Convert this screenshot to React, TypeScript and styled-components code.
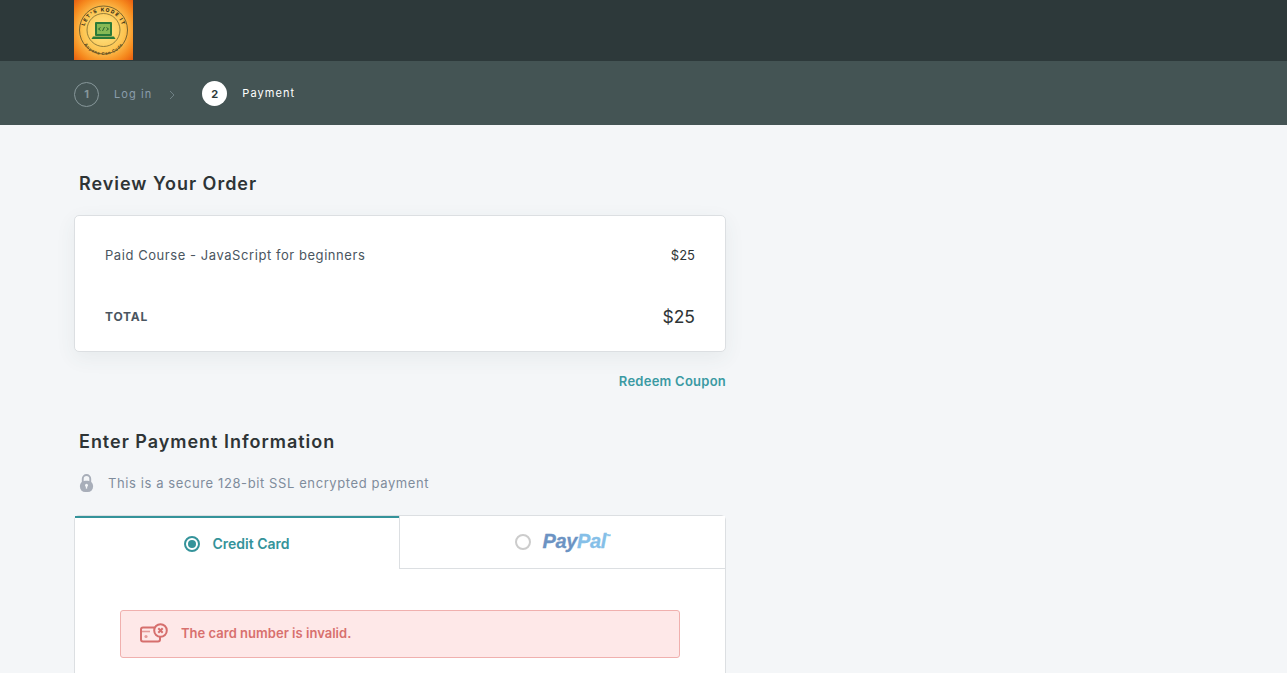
import React from "react";
import styled, { createGlobalStyle } from "styled-components";

const GlobalStyle = createGlobalStyle`
  html, body {
    margin: 0;
    padding: 0;
    height: 100%;
    overflow: hidden;
    background: #f4f6f8;
  }
  body {
    font-family: "Inter", "Liberation Sans", sans-serif;
  }
`;

const Page = styled.div`
  height: 100vh;
  overflow: hidden;
`;

const TopBar = styled.header`
  height: 61px;
  padding-left: 74px;
  background: #2d393a;
`;

const StepsBar = styled.nav`
  height: 64px;
  box-sizing: border-box;
  padding: 2px 0 0 74px;
  display: flex;
  align-items: center;
  background: #445454;
`;

const Step = styled.div`
  display: flex;
  align-items: center;
  gap: 15px;
`;

const StepNumber = styled.span<{ $active?: boolean }>`
  width: 25px;
  height: 25px;
  box-sizing: border-box;
  border-radius: 50%;
  display: flex;
  align-items: center;
  justify-content: center;
  font-size: 11px;
  font-weight: 700;
  color: ${p => (p.$active ? "#2d393a" : "#87979a")};
  background: ${p => (p.$active ? "#fff" : "transparent")};
  border: ${p => (p.$active ? "none" : "1px solid #87979a")};
  margin-top: ${p => (p.$active ? "-1px" : "0")};
`;

const StepLabel = styled.span<{ $active?: boolean }>`
  font-size: 11px;
  letter-spacing: 1.08px;
  color: ${p => (p.$active ? "#fff" : "#8a9dab")};
  margin-top: ${p => (p.$active ? "-3px" : "0")};
`;

const Chevron = styled.svg`
  margin: 2px 27px 0 17px;
`;

const Content = styled.main`
  width: 652px;
  margin-left: 74px;
  padding-top: 48px;
`;

const Heading = styled.h2`
  margin: 0 0 0 5px;
  font-size: 18px;
  line-height: 22px;
  font-weight: 600;
  letter-spacing: 0.98px;
  color: #2e3436;
`;

const OrderCard = styled.section`
  margin-top: 20px;
  height: 135px;
  padding: 0 30px;
  display: flex;
  flex-direction: column;
  background: #fff;
  border: 1px solid #dcdfe2;
  border-radius: 5px;
  box-shadow: 0 6px 20px rgba(60, 80, 90, 0.07);
`;

const OrderRow = styled.div<{ $height: number }>`
  height: ${p => p.$height}px;
  display: flex;
  justify-content: space-between;
  align-items: center;
`;

const CourseName = styled.span`
  font-size: 13px;
  letter-spacing: 0.56px;
  color: #4a5560;
`;

const Price = styled.span<{ $large?: boolean }>`
  font-size: ${p => (p.$large ? "17.5px" : "13px")};
  color: #2e3436;
`;

const TotalLabel = styled.span`
  font-size: 12px;
  font-weight: 700;
  letter-spacing: 0.75px;
  color: #4a5560;
`;

const CouponRow = styled.div`
  margin-top: 21px;
  display: flex;
  justify-content: flex-end;
`;

const CouponLink = styled.a`
  font-size: 13px;
  line-height: 16px;
  font-weight: 600;
  letter-spacing: 0.25px;
  color: #3b9aa3;
`;

const SecondHeading = styled(Heading)`
  margin-top: 42px;
`;

const SecureRow = styled.div`
  margin: 20px 0 0 5px;
  height: 20px;
  display: flex;
  align-items: center;
  gap: 14px;
  font-size: 13px;
  letter-spacing: 0.6px;
  color: #7f8c9c;
`;

const PaymentCard = styled.section`
  margin-top: 22px;
  height: 400px;
  background: #fff;
  border: 1px solid #dcdfe2;
  border-radius: 5px;
`;

const Tabs = styled.div`
  display: flex;
  height: 53px;
`;

const Tab = styled.div<{ $active?: boolean }>`
  flex: ${p => (p.$active ? "0 0 324px" : "1")};
  display: flex;
  align-items: center;
  justify-content: center;
  box-sizing: border-box;
  background: #fff;
  height: 53px;
  border-top: ${p => (p.$active ? "2px solid #34939a" : "none")};
  border-left: ${p => (p.$active ? "none" : "1px solid #dcdfe2")};
  border-bottom: ${p => (p.$active ? "none" : "1px solid #dcdfe2")};
  gap: 12px;
  padding-bottom: ${p => (p.$active ? "0" : "1px")};
`;

const Radio = styled.span<{ $checked?: boolean }>`
  width: 16px;
  height: 16px;
  box-sizing: border-box;
  border-radius: 50%;
  display: flex;
  align-items: center;
  justify-content: center;
  border: 2px solid ${p => (p.$checked ? "#34939a" : "#cccccc")};
  &::after {
    content: "";
    width: 8px;
    height: 8px;
    border-radius: 50%;
    background: ${p => (p.$checked ? "#34939a" : "transparent")};
  }
`;

const TabLabel = styled.span`
  font-size: 14px;
  font-weight: 600;
  color: #34939a;
`;

const PayPalLogo = styled.span`
  font-family: "Liberation Sans", sans-serif;
  font-size: 20px;
  font-weight: 700;
  font-style: italic;
  letter-spacing: -0.4px;
  color: #6c93c3;
  -webkit-text-stroke: 0.3px currentColor;
  display: flex;
  em {
    color: #85bfe8;
  }
  sup {
    font-size: 5px;
    font-style: normal;
    color: #85bfe8;
    line-height: 12px;
  }
`;

const Alert = styled.div`
  margin: 41px 45px 0;
  height: 48px;
  box-sizing: border-box;
  padding: 0 19px 2px;
  display: flex;
  align-items: center;
  gap: 13px;
  background: #fee8e8;
  border: 1px solid #f0b0ae;
  border-radius: 3px;
  font-size: 13px;
  font-weight: 600;
  letter-spacing: 0.02px;
  color: #d8706e;
`;

const LogoMark = () => (
  <svg width="59" height="60" viewBox="0 0 59 60" style={{ display: "block" }}>
    <defs>
      <radialGradient id="logoBg" cx="50%" cy="50%" r="70%">
        <stop offset="0%" stopColor="#fdeb8e" />
        <stop offset="50%" stopColor="#fdc552" />
        <stop offset="80%" stopColor="#f68a1e" />
        <stop offset="100%" stopColor="#e85f10" />
      </radialGradient>
      <path id="logoTop" d="M10 31a19.5 19.5 0 0 1 39 0" />
      <path id="logoBottom" d="M6.5 32a23 23 0 0 0 46 0" />
    </defs>
    <rect width="59" height="60" fill="url(#logoBg)" />
    <circle cx="29.5" cy="30" r="24" fill="none" stroke="#6a5a2a" strokeWidth="0.9" />
    <circle cx="29.5" cy="30" r="16.5" fill="none" stroke="#7a6a30" strokeWidth="0.8" />
    <text fontSize="5" fontWeight="800" fill="#3c3418" letterSpacing="1.2">
      <textPath href="#logoTop" startOffset="50%" textAnchor="middle">LET'S KODE IT</textPath>
    </text>
    <text fontSize="4.2" fontWeight="700" fill="#5a4a20" letterSpacing="0.6">
      <textPath href="#logoBottom" startOffset="50%" textAnchor="middle">Anyone Can Code</textPath>
    </text>
    <rect x="21" y="22" width="17" height="14" rx="1" fill="#2a7a38" />
    <rect x="23" y="24" width="13" height="10" fill="#86b955" />
    <path d="M26.5 27.5l-2 1.5 2 1.5M32.5 27.5l2 1.5-2 1.5M30.5 27l-2 4" fill="none" stroke="#1d5a2a" strokeWidth="0.9" />
    <path d="M19 36.5h21l1.5 2.5H17.5z" fill="#2a7a38" />
  </svg>
);

const LockIcon = () => (
  <svg width="15" height="20" viewBox="0 0 16 20">
    <path d="M4 9V5.5a4 4 0 0 1 8 0V9" fill="none" stroke="#a8aeb9" strokeWidth="2" />
    <rect x="1" y="7.5" width="14" height="12" rx="5.5" fill="#a8aeb9" />
    <circle cx="8" cy="12.5" r="1.6" fill="#f4f6f8" />
    <rect x="7.3" y="13" width="1.4" height="3" fill="#f4f6f8" />
  </svg>
);

const CardErrorIcon = () => (
  <svg width="28" height="20" viewBox="0 0 28 20" fill="none" stroke="#d66f6d">
    <path d="M15 4.5H3a2 2 0 0 0-2 2v10a2 2 0 0 0 2 2h15a2 2 0 0 0 2-2v-2.5" strokeWidth="2" />
    <path d="M2 8.5H10" strokeWidth="1.6" stroke="#e49a98" />
    <circle cx="6" cy="13.5" r="1.6" fill="#e49a98" stroke="none" />
    <circle cx="20.5" cy="7.5" r="6.3" strokeWidth="2" />
    <path d="M18.3 5.3l4.4 4.4M22.7 5.3l-4.4 4.4" strokeWidth="2" />
  </svg>
);

export default function App(): JSX.Element {
  return (
    <Page>
      <GlobalStyle />
      <TopBar>
        <LogoMark />
      </TopBar>
      <StepsBar>
        <Step>
          <StepNumber>1</StepNumber>
          <StepLabel>Log in</StepLabel>
        </Step>
        <Chevron width="6" height="10" viewBox="0 0 6 10">
          <path d="M1 1l4 4-4 4" fill="none" stroke="#6f8084" strokeWidth="1" />
        </Chevron>
        <Step>
          <StepNumber $active>2</StepNumber>
          <StepLabel $active>Payment</StepLabel>
        </Step>
      </StepsBar>
      <Content>
        <Heading>Review Your Order</Heading>
        <OrderCard>
          <OrderRow $height={78}>
            <CourseName>Paid Course - JavaScript for beginners</CourseName>
            <Price>$25</Price>
          </OrderRow>
          <OrderRow $height={45}>
            <TotalLabel>TOTAL</TotalLabel>
            <Price $large>$25</Price>
          </OrderRow>
        </OrderCard>
        <CouponRow>
          <CouponLink>Redeem Coupon</CouponLink>
        </CouponRow>
        <SecondHeading>Enter Payment Information</SecondHeading>
        <SecureRow>
          <LockIcon />
          This is a secure 128-bit SSL encrypted payment
        </SecureRow>
        <PaymentCard>
          <Tabs>
            <Tab $active>
              <Radio $checked />
              <TabLabel>Credit Card</TabLabel>
            </Tab>
            <Tab>
              <Radio />
              <PayPalLogo>
                Pay<em>Pal</em>
                <sup>™</sup>
              </PayPalLogo>
            </Tab>
          </Tabs>
          <Alert>
            <CardErrorIcon />
            The card number is invalid.
          </Alert>
        </PaymentCard>
      </Content>
    </Page>
  );
}
